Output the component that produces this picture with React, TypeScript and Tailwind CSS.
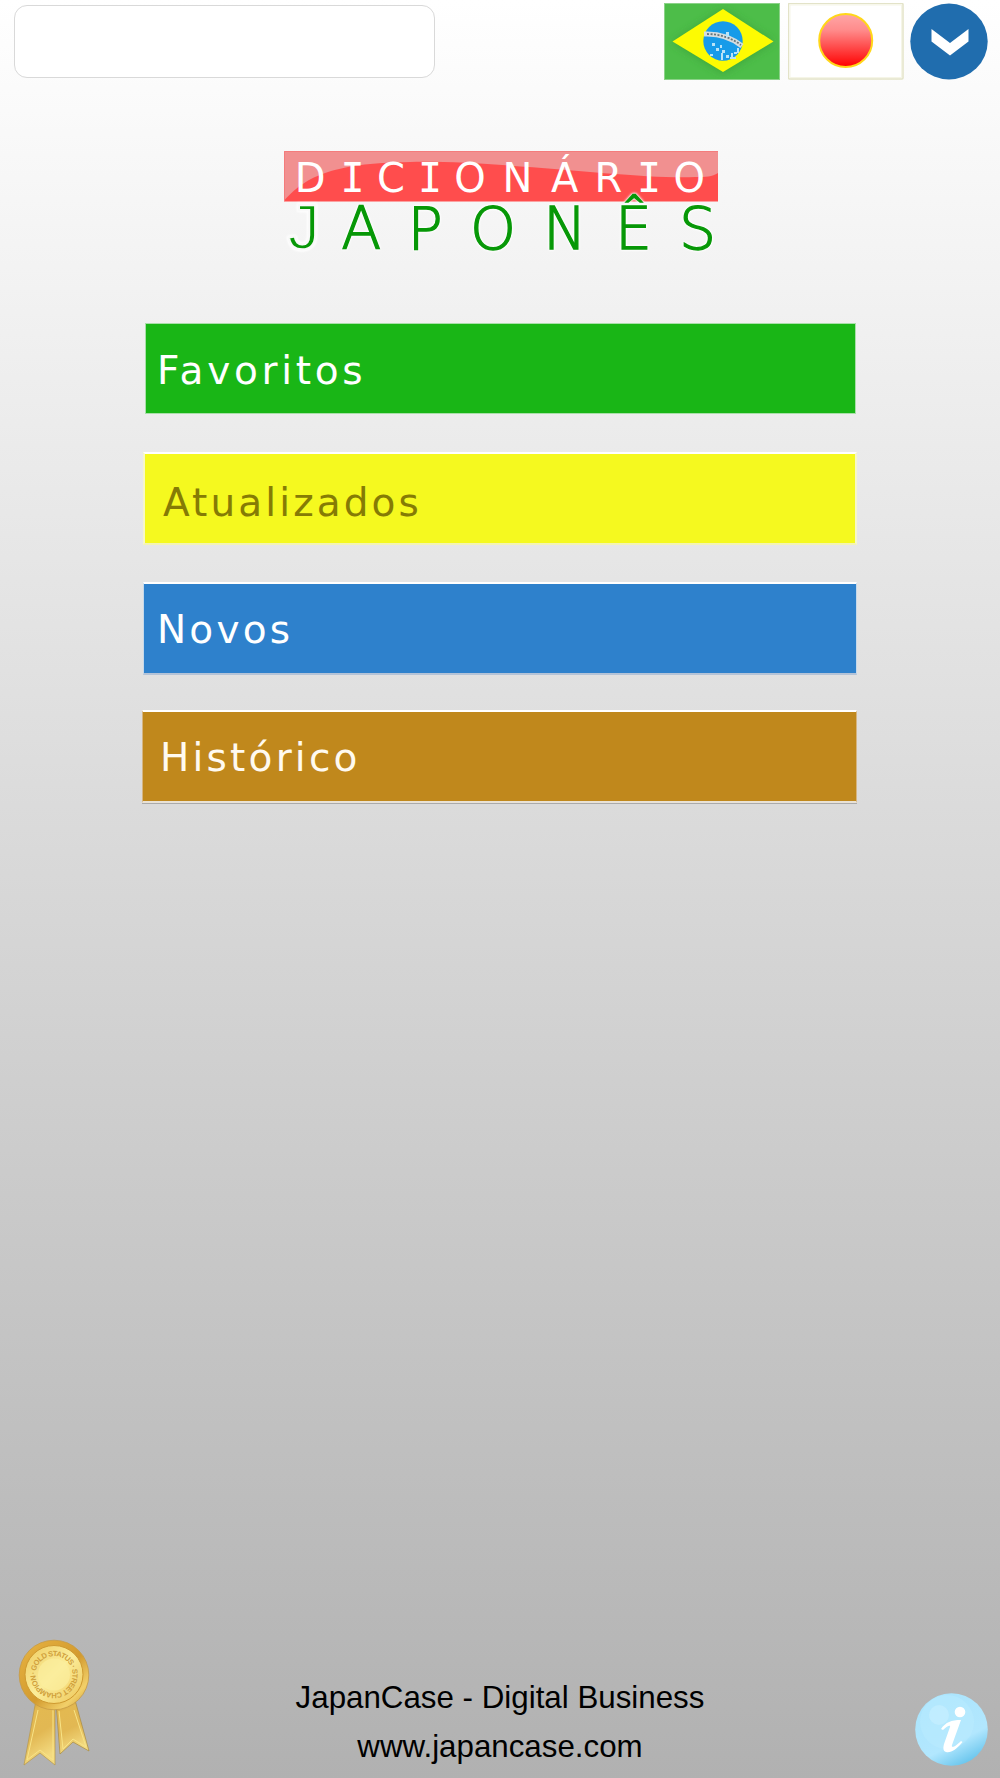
import { useState } from "react"

const menuItems = [
  {
    label: "Favoritos",
    box: "mt-[62px] ml-[145px] h-[91px] w-[711px] border border-[#a9dfa9] bg-[#19b616] pl-[11px] pt-[5px] text-white tracking-[3.7px]",
  },
  {
    label: "Atualizados",
    box: "mt-[38px] ml-[143px] h-[93px] w-[714px] border-2 border-t-white border-x-[#f7f7c8] border-b-[#f3f3b4] bg-[#f5f91f] pl-[18px] pt-[9px] text-[#857b05] tracking-[3.1px]",
  },
  {
    label: "Novos",
    box: "mt-[37px] ml-[143px] h-[93px] w-[714px] border border-t-2 border-b-2 border-t-white border-x-[#c5d9eb] border-b-[#b4c3d7] bg-[#2e81cc] pl-[13px] pt-[3px] text-white tracking-[3.2px]",
  },
  {
    label: "Histórico",
    box: "mt-[35px] ml-[142px] h-[93px] w-[715px] border border-t-2 border-b-2 border-t-white border-x-[#d5b582] border-b-[#e9e2d6] bg-[#c0881c] pl-[17px] pt-[3px] text-[#fffaf0] shadow-[0_1px_0_#aaaaaa] tracking-[3.2px]",
  },
]

function BrazilFlag() {
  return (
    <svg className="h-[77px] w-[116px]" viewBox="0 0 116 77">
      <defs>
        <filter id="leaf" x="-20%" y="-20%" width="140%" height="140%">
          <feGaussianBlur stdDeviation="4" />
        </filter>
      </defs>
      <rect width="116" height="77" fill="#4dbd49" />
      <path d="M59 7 109 39 59 70 9 39Z" fill="#399b35" filter="url(#leaf)" opacity=".75" />
      <rect x=".5" y=".5" width="115" height="76" fill="none" stroke="#8bd288" />
      <path d="M59 6 109.500 38.500 59 69 8.500 38.500Z" fill="#fdfb02" />
      <circle cx="59" cy="38" r="19.700" fill="#179be9" />
      <path d="M40 31Q62 30 78 43" fill="none" stroke="#d5dde0" strokeWidth="5" />
      <path d="M43 31Q62 31 77 42" fill="none" stroke="#68777b" strokeWidth="1.800" strokeDasharray="2 1.500" />
      <g fill="#b9e4f8">
        <path d="M62 29h3v5h-3zM48 40h3v3h-3zM52 45h3v3h-3zM56 42h2v3h-2zM58 47h3v3h-3zM57 50h2v7h-2zM62 52h3v3h-3zM67 50h2v5h-2zM70 49h3v2h-3zM73 45h2v5h-2zM46 51h3v2h-3zM66 54h6v2h-6z" />
      </g>
    </svg>
  )
}

function JapanFlag() {
  return (
    <svg className="h-[77px] w-[116px]" viewBox="0 0 116 77">
      <defs>
        <linearGradient id="sun" x1="0" y1="0" x2="0" y2="1">
          <stop offset="0" stopColor="#ffa6a6" />
          <stop offset=".3" stopColor="#ff8c8c" />
          <stop offset="1" stopColor="#ff0000" />
        </linearGradient>
      </defs>
      <rect x=".5" y=".5" width="114.500" height="75.500" rx="1" fill="white" stroke="#e3e3c8" strokeWidth="1.500" />
      <rect x="2" y="2" width="111.500" height="72.500" fill="none" stroke="#f5f5e7" />
      <circle cx="57.700" cy="37.500" r="26.500" fill="url(#sun)" stroke="#ffd719" strokeWidth="2" />
    </svg>
  )
}

function ChevronButton() {
  return (
    <svg className="h-[77px] w-[78px]" viewBox="0 0 78 77">
      <ellipse cx="39" cy="38.500" rx="38.700" ry="38" fill="#206dae" />
      <path d="M21.500 26 40 40 58.500 26V38.500L40 52.500 21.500 38.500Z" fill="white" />
    </svg>
  )
}

function Logo() {
  return (
    <svg className="ml-[250px] mt-[60px] block h-[121px] w-[500px]" viewBox="250 140 500 121">
      <rect x="284" y="151" width="434" height="50.500" fill="#ff4d4d" />
      <path d="M284 151H718V173C712 177 706 177 695 177C640 180 500 160 410 162C330 163 304 178 284 201Z" fill="#f19090" />
      <path d="M284.500 201V151.500H718" fill="none" stroke="#f47c7c" />
      <text
        x="294.800 340.500 377 418 454.300 502.500 551 594.500 637 673.500"
        y="191.700"
        fill="white"
        fontSize="40"
        fontFamily="DejaVu Sans"
      >
        D<tspan fontFamily="DejaVu Sans Mono">I</tspan>C<tspan fontFamily="DejaVu Sans Mono">I</tspan>ONÁR<tspan fontFamily="DejaVu Sans Mono">I</tspan>O
      </text>
      <text
        x="283 341.200 407.500 470 543 615 679"
        y="248.700"
        fill="#079807"
        stroke="#079807"
        strokeWidth="1.300"
        fontSize="58.500"
        fontWeight="200"
        fontFamily="DejaVu Sans"
        className="[filter:drop-shadow(0_0_1px_white)_drop-shadow(0_0_1px_white)]"
      >
        <tspan fontFamily="Liberation Mono" fontWeight="400" fontSize="67" stroke="#f9f9f9" strokeWidth="2.300">J</tspan>APONÊS
      </text>
    </svg>
  )
}

function Medal() {
  return (
    <svg className="h-[130px] w-[74px]" viewBox="17 1637 74 130">
      <defs>
        <linearGradient id="gold" x1="0" y1="0" x2="1" y2="1">
          <stop offset="0" stopColor="#e9bd50" />
          <stop offset=".2" stopColor="#e0aa3a" />
          <stop offset=".55" stopColor="#d39b2f" />
          <stop offset=".8" stopColor="#f2d069" />
          <stop offset="1" stopColor="#c99427" />
        </linearGradient>
        <linearGradient id="face" x1="0" y1="0" x2="1" y2="1">
          <stop offset="0" stopColor="#eecb60" />
          <stop offset=".5" stopColor="#fbed9a" />
          <stop offset="1" stopColor="#edc556" />
        </linearGradient>
        <linearGradient id="ribbon" x1="0" y1="0" x2=".3" y2="1">
          <stop offset="0" stopColor="#c9922b" />
          <stop offset=".25" stopColor="#e3b951" />
          <stop offset=".6" stopColor="#e2b853" />
          <stop offset="1" stopColor="#f3da80" />
        </linearGradient>
        <path id="ring" d="M35.500 1674.500a18.500 18.500 0 0 1 37 0a18.500 18.500 0 0 1-37 0" />
      </defs>
      <path d="M36 1700H55L55 1765 40 1753 24 1765Z" fill="url(#ribbon)" stroke="#b69647" strokeWidth=".7" />
      <path d="M56 1703 75 1700 89 1751 73 1742 60 1754Z" fill="url(#ribbon)" stroke="#a88a3c" strokeWidth=".7" />
      <path d="M38 1710 27 1760 40 1750 53 1760V1710M59 1711 63 1749 73 1739 86 1747 74 1710" stroke="#f8e487" fill="none" />
      <circle cx="54" cy="1675" r="34.800" fill="url(#gold)" stroke="#c79b45" strokeWidth=".8" />
      <circle cx="54" cy="1674.500" r="29" fill="url(#face)" stroke="#cf9a30" strokeWidth="1" />
      <circle cx="54" cy="1674.500" r="16" fill="#fbee9e" opacity=".7" />
      <text fontFamily="Liberation Sans" fontSize="7.500" fontWeight="bold" fill="#d0a03c">
        <textPath href="#ring" textLength="115">· GOLD STATUS · STREET CHAMPION</textPath>
      </text>
    </svg>
  )
}

function InfoIcon() {
  return (
    <svg className="h-[73px] w-[73px]" viewBox="0 0 73 73">
      <defs>
        <linearGradient id="water" x1=".25" y1=".1" x2=".72" y2="1">
          <stop offset="0" stopColor="#ace5fd" />
          <stop offset=".65" stopColor="#b2e7fe" />
          <stop offset="1" stopColor="#62c2eb" />
        </linearGradient>
      </defs>
      <circle cx="36.500" cy="36.500" r="36.300" fill="url(#water)" />
      <circle cx="32" cy="29" r="27" fill="#c1edff" opacity=".35" />
      <circle cx="24" cy="22" r="10" fill="#cef1ff" opacity=".5" />
      <circle cx="45" cy="19" r="5.300" fill="white" />
      <path d="M26 36C31 29 36 27 46 27L37 52C36 56 41 53 46 48L47.500 49C41 57 36 60 31 59C28 58 28 55 29 51L35 34C36 31 31 34 28 37Z" fill="white" />
    </svg>
  )
}

export default function App() {
  const [search, setSearch] = useState("")

  return (
    <div className="flex h-[1778px] w-[1000px] flex-col overflow-hidden bg-linear-to-b from-white to-[#b1b1b1] font-['Liberation_Sans',sans-serif]">
      <header className="flex h-[80px] shrink-0 items-start pl-[14px] pt-[3px]">
        <input
          value={search}
          onChange={(e) => setSearch(e.target.value)}
          aria-label="Buscar"
          className="mt-[2px] h-[73px] w-[421px] rounded-[13px] border border-[#d9d9d9] bg-white px-4 text-3xl outline-none"
        />
        <div className="ml-[229px] flex">
          <BrazilFlag />
          <div className="ml-[8px]"><JapanFlag /></div>
          <button className="ml-[6px]" aria-label="Menu"><ChevronButton /></button>
        </div>
      </header>
      <main>
        <Logo />
        <nav className="font-['DejaVu_Sans',sans-serif] text-[39px]">
          {menuItems.map((item) => (
            <button key={item.label} className={`flex items-center ${item.box}`}>
              {item.label}
            </button>
          ))}
        </nav>
      </main>
      <footer className="mt-auto flex items-end justify-between pl-[17px] pr-[12px]">
        <div className="mb-[11px]"><Medal /></div>
        <div className="mb-[7px] mr-[6px] text-center text-[31.300px] leading-[48.500px] text-black">
          <p>JapanCase - Digital Business</p>
          <p>www.japancase.com</p>
        </div>
        <div className="mb-[12px]"><InfoIcon /></div>
      </footer>
    </div>
  )
}
